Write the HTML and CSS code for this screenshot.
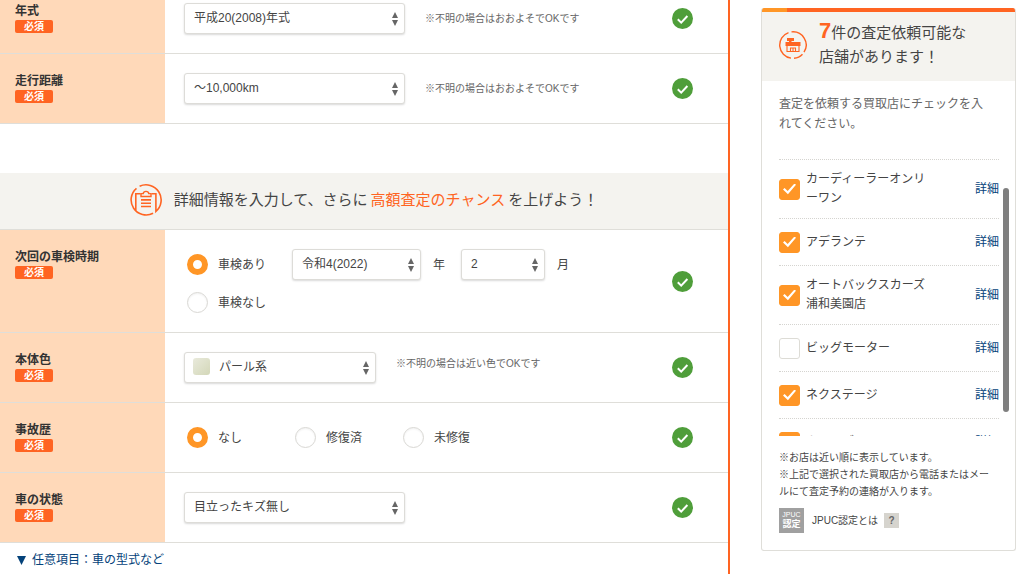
FILE: index.html
```html
<!DOCTYPE html>
<html lang="ja">
<head>
<meta charset="utf-8">
<title>査定依頼</title>
<link rel="stylesheet" href="styles.css">
</head>
<body>
<svg class="defs" aria-hidden="true">
  <symbol id="ok" viewBox="0 0 21 21"><circle cx="10.5" cy="10.5" r="10.5" fill="#4f9e3a"/><path d="M5.8 11.2l3.4 3.4 6.2-6.6" fill="none" stroke="#fff" stroke-width="2"/></symbol>
  <symbol id="updown" viewBox="0 0 6 14"><path d="M3 0l3 6H0zM3 14l3-6H0z" fill="#666"/></symbol>
</svg>
<div class="page">
  <main class="main">
    <form class="form">
      <div class="row">
        <div class="head"><label for="year">年式</label><span class="badge">必須</span></div>
        <div class="cell">
          <span class="select wide"><select id="year"><option>平成20(2008)年式</option></select><svg class="arrows"><use href="#updown"/></svg></span>
          <span class="note">※不明の場合はおおよそでOKです</span>
          <svg class="ok"><use href="#ok"/></svg>
        </div>
      </div>
      <div class="row">
        <div class="head"><label for="mileage">走行距離</label><span class="badge">必須</span></div>
        <div class="cell">
          <span class="select wide"><select id="mileage"><option>〜10,000km</option></select><svg class="arrows"><use href="#updown"/></svg></span>
          <span class="note">※不明の場合はおおよそでOKです</span>
          <svg class="ok"><use href="#ok"/></svg>
        </div>
      </div>

      <h2 class="band">
        <svg class="band-icon" viewBox="0 0 32 32" fill="none" stroke="#ff6422" stroke-width="1.6">
          <path d="M9.600 2.300A15.100 15.100 0 0 1 25.900 27.400V9.800H21.500M6.500 4.300A15.100 15.100 0 0 0 23.100 29.300M10.500 9.800H5.800V27"/>
          <path d="M11 12.5V9.6H13.2C13.4 8 14.5 7.4 16 7.4S18.6 8 18.8 9.6H21V12.5Z" stroke-width="1.4"/>
          <path d="M11 15.9H21M11 19.2H21M11 22.5H21"/>
        </svg>
        <span>詳細情報を入力して、さらに<em class="accent">高額査定のチャンス</em>を上げよう！</span>
      </h2>

      <div class="row">
        <div class="head"><span>次回の車検時期</span><span class="badge">必須</span></div>
        <div class="cell">
          <div class="stack">
            <div class="line">
              <label class="radio"><input type="radio" name="inspection" checked>車検あり</label>
              <span class="select era"><select aria-label="年"><option>令和4(2022)</option></select><svg class="arrows"><use href="#updown"/></svg></span>
              <span class="unit">年</span>
              <span class="select month"><select aria-label="月"><option>2</option></select><svg class="arrows"><use href="#updown"/></svg></span>
              <span class="unit">月</span>
            </div>
            <label class="radio"><input type="radio" name="inspection">車検なし</label>
          </div>
          <svg class="ok"><use href="#ok"/></svg>
        </div>
      </div>
      <div class="row">
        <div class="head"><label for="color">本体色</label><span class="badge">必須</span></div>
        <div class="cell">
          <span class="select color"><select id="color"><option>パール系</option></select><span class="swatch"></span><svg class="arrows"><use href="#updown"/></svg></span>
          <span class="note raised">※不明の場合は近い色でOKです</span>
          <svg class="ok"><use href="#ok"/></svg>
        </div>
      </div>
      <div class="row">
        <div class="head"><span>事故歴</span><span class="badge">必須</span></div>
        <div class="cell">
          <div class="options">
            <label class="radio"><input type="radio" name="accident" checked>なし</label>
            <label class="radio"><input type="radio" name="accident">修復済</label>
            <label class="radio"><input type="radio" name="accident">未修復</label>
          </div>
          <svg class="ok"><use href="#ok"/></svg>
        </div>
      </div>
      <div class="row">
        <div class="head"><label for="state">車の状態</label><span class="badge">必須</span></div>
        <div class="cell">
          <span class="select wide"><select id="state"><option>目立ったキズ無し</option></select><svg class="arrows"><use href="#updown"/></svg></span>
          <svg class="ok"><use href="#ok"/></svg>
        </div>
      </div>
      <a class="more" href="#"><svg class="tri" viewBox="0 0 9 9"><path d="M0 0h9L4.500 9z" fill="#04427a"/></svg>任意項目：車の型式など</a>
    </form>
  </main>

  <aside class="side">
    <section class="card">
      <h2 class="card-head">
        <svg class="shop-icon" viewBox="0 0 28 28">
          <path d="M9.500 1.600A13.200 13.200 0 0 0 12 27.100M12.500 .9A13.200 13.200 0 0 1 25 21.200M23.500 23.200A13.200 13.200 0 0 1 15 27.200" fill="none" stroke="#ff6422" stroke-width="1.400"/>
          <path d="M8 7h7v3h-2.500v1H21.500v4H6.500v-4h3.500v-1H8z" fill="#ff6422"/>
          <path d="M8 15v5.500h12V15M11.500 20.500v-3.500h5v3.500M14 17v3.500" fill="none" stroke="#ff6422" stroke-width="1.100"/>
        </svg>
        <span><strong class="count">7</strong>件の査定依頼可能な<br>店舗があります！</span>
      </h2>
      <div class="card-body">
        <p class="lead">査定を依頼する買取店にチェックを入れてください。</p>
        <div class="list-area">
          <ul class="shops">
            <li><label class="shop"><input type="checkbox" checked><span>カーディーラーオンリーワン</span></label><a href="#">詳細</a></li>
            <li><label class="shop"><input type="checkbox" checked><span>アデランテ</span></label><a href="#">詳細</a></li>
            <li><label class="shop"><input type="checkbox" checked><span>オートバックスカーズ浦和美園店</span></label><a href="#">詳細</a></li>
            <li><label class="shop"><input type="checkbox"><span>ビッグモーター</span></label><a href="#">詳細</a></li>
            <li><label class="shop"><input type="checkbox" checked><span>ネクステージ</span></label><a href="#">詳細</a></li>
            <li><label class="shop"><input type="checkbox" checked><span>カーセブン</span></label><a href="#">詳細</a></li>
          </ul>
          <span class="thumb"></span>
        </div>
        <p class="remarks">※お店は近い順に表示しています。<br>※上記で選択された買取店から電話またはメールにて査定予約の連絡が入ります。</p>
        <div class="jpuc">
          <span class="jpuc-mark"><span>JPUC</span><b>認定</b></span>
          <span>JPUC認定とは</span>
          <button type="button" class="help">?</button>
        </div>
      </div>
    </section>
  </aside>
</div>
</body>
</html>
```
FILE: styles.css
```css
* { box-sizing: border-box; }
html, body { height: 100%; }
body {
  margin: 0;
  overflow: hidden;
  background: #fff;
  color: #444;
  font: 12px/18px "Liberation Sans", "Noto Sans CJK JP", sans-serif;
}
h2, p, ul { margin: 0; padding: 0; font-weight: normal; }
svg { display: block; flex: none; }
a { color: #04427a; text-decoration: none; }
input, select, button { margin: 0; font: inherit; color: inherit; }
.defs { position: absolute; width: 0; height: 0; }

.page { display: flex; min-height: 100%; }
.main { flex: 1; min-width: 0; border-right: 2px solid #ff6422; }
/* The form is scrolled slightly past its first row's top edge. */
.form { margin-top: -16px; }

.row { display: flex; min-height: 70px; border-bottom: 1px solid #dfded9; }
.head {
  flex: none;
  width: 165px;
  padding: 18px 15px;
  background: #ffd9b9;
  color: #333;
  font-weight: bold;
}
.head > :first-child { display: block; }
.badge {
  display: block;
  width: 38px;
  border-radius: 2px;
  background: #ff6422;
  color: #fff;
  font-size: 10px;
  line-height: 13px;
  text-align: center;
}
.cell { flex: 1; display: flex; align-items: center; padding: 19px 35px 19px 19px; }
.ok { width: 21px; height: 21px; margin-left: auto; }

.select { position: relative; display: block; flex: none; }
.select select {
  display: block;
  appearance: none;
  width: 100%;
  height: 31px;
  padding: 0 24px 2px 9px;
  border: 1px solid #dddcd8;
  border-radius: 3px;
  background: #fff;
  box-shadow: 0 1px 2px #00000026;
}
.arrows { position: absolute; right: 7px; top: 9px; width: 6px; height: 14px; pointer-events: none; }
.wide { width: 221px; }
.era { width: 129px; margin-left: 26px; }
.month { width: 84px; }
.color { width: 192px; }
.color select { padding-left: 34px; }
.swatch {
  position: absolute;
  left: 9px;
  top: 6px;
  width: 17px;
  height: 17px;
  border-radius: 3px;
  background: linear-gradient(135deg, #e9eadc, #d3d7b8);
}
.note { margin-left: 20px; color: #666; font-size: 10px; }
.raised { padding-bottom: 8px; }
.unit { margin: 0 16px 0 12px; }

.stack { display: flex; flex-direction: column; gap: 12px; }
.line { display: flex; align-items: center; }
.options { display: grid; grid-template-columns: repeat(3, 108px); }
.radio { display: flex; align-items: center; gap: 10px; padding-left: 3px; }
.radio input {
  appearance: none;
  width: 21px;
  height: 21px;
  border: 1px solid #d9d8d4;
  border-radius: 50%;
  background: #fff;
  box-shadow: inset 0 1px 2px #0000000f;
}
.radio input:checked { border: 6px solid #ff9626; box-shadow: none; }

.band {
  display: flex;
  align-items: center;
  justify-content: center;
  gap: 12px;
  min-height: 57px;
  margin-top: 49px;
  padding-bottom: 2px;
  border-bottom: 1px solid #dfded9;
  background: #f4f3ef;
  font-size: 15px;
  line-height: 24px;
}
.band-icon { width: 32px; height: 32px; }
.accent { margin: 0 3px; color: #ff6422; font-style: normal; }
.more { display: inline-flex; align-items: center; gap: 6px; padding: 8px 17px; }
.tri { width: 9px; height: 9px; }

.side { flex: none; width: 294px; padding: 8px 8px 0 31px; }
.card { border: 1px solid #dfded9; border-top: 0; border-radius: 3px; overflow: hidden; }
.card-head {
  display: flex;
  align-items: center;
  gap: 12px;
  padding: 13px 17px 12px;
  background: linear-gradient(90deg, #ff9626 25px, #ff6422 25px) top / 100% 4px no-repeat #f4f3ef;
  font-size: 15px;
  line-height: 24px;
}
.shop-icon { width: 28px; height: 28px; }
.count { color: #ff6422; font-size: 22px; line-height: 20px; }
.card-body { padding: 13px 16px 17px 17px; }
.lead { padding-right: 8px; color: #666; line-height: 20px; }
.list-area { position: relative; height: 277px; margin-top: 25px; }
.shops { height: 100%; overflow: hidden; list-style: none; line-height: 19px; }
.shops li {
  display: flex;
  align-items: center;
  min-height: 47px;
  padding: 10px 0;
  border-top: 1px dotted #d5d4d0;
}
.shop { flex: 1; display: flex; align-items: center; gap: 6px; padding-right: 40px; line-break: anywhere; }
.shop input {
  appearance: none;
  flex: none;
  display: grid;
  place-items: center;
  width: 21px;
  height: 21px;
  border: 1px solid #dddcd6;
  border-radius: 3px;
  background: #fff;
}
.shop input:checked { border-color: #ff9626; background: #ff9626; }
.shop input:checked::before {
  content: "";
  width: 13px;
  height: 11px;
  background: #fff;
  clip-path: polygon(0 55%, 12% 42%, 36% 68%, 88% 0, 100% 12%, 38% 98%);
}
.thumb {
  position: absolute;
  right: -10px;
  top: 29px;
  width: 6px;
  height: 224px;
  border-radius: 3px;
  background: #7f7f7f;
}
.remarks { margin-top: 13px; padding-right: 5px; font-size: 10px; line-height: 17px; }
.jpuc { display: flex; align-items: center; margin-top: 8px; font-size: 10px; }
.jpuc-mark {
  display: flex;
  flex-direction: column;
  align-items: center;
  width: 25px;
  height: 25px;
  margin-right: 8px;
  padding-top: 3px;
  background: #a0a0a0;
  color: #fff;
  font-size: 7px;
  line-height: 8px;
}
.jpuc-mark b { font-size: 9px; line-height: 11px; }
.help {
  width: 15px;
  height: 15px;
  margin-left: 6px;
  padding: 0;
  border: 0;
  background: #d6d4ce;
  color: #666;
  font-weight: bold;
  line-height: 15px;
}
```
